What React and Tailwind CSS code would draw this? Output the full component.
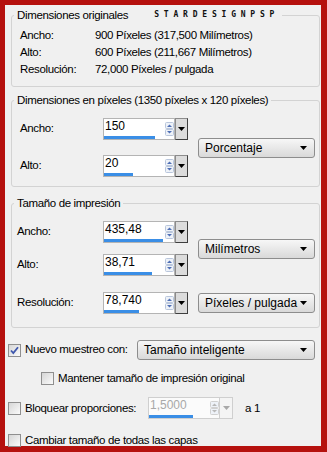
import React from 'react';

const font = "font-['Liberation_Sans',Arial,sans-serif] text-[11.5px] tracking-[-0.35px] text-black";

function Arrow({ color = '#000' }) {
  return (
    <svg width="7" height="4" viewBox="0 0 7 4">
      <path d="M0 0h7L3.5 4z" fill={color} />
    </svg>
  );
}

function Spinner({ disabled }) {
  const stroke = disabled ? '#d0d0d0' : '#b9c6dc';
  const fill = disabled ? '#b8b8b8' : '#4f6fb5';
  return (
    <svg width="9" height="14" viewBox="0 0 9 14">
      <rect x="0.5" y="0.5" width="8" height="6" rx="1" fill="#eef2f8" stroke={stroke} />
      <path d="M2 5h5L4.5 2.5z" fill={fill} />
      <rect x="0.5" y="7.5" width="8" height="6" rx="1" fill="#eef2f8" stroke={stroke} />
      <path d="M2 9h5L4.5 11.5z" fill={fill} />
    </svg>
  );
}

function SpinField({ value, bar, disabled }) {
  return (
    <div className="flex h-[22px]">
      <div className={`flex w-[72px] border ${disabled ? 'border-[#cfcfcf] bg-[#fbfbfb]' : 'border-[#b4b4b4] bg-white'}`}>
        <div className="flex flex-1 flex-col">
          <span className={`pl-[1px] text-[12px] leading-[15px] tracking-normal ${disabled ? 'text-[#a8a8a8]' : ''}`}>{value}</span>
          <div className={`mt-auto h-[3px] bg-[#3a8ee6] ${bar}`} />
        </div>
        <div className="flex w-[10px] items-center justify-center">
          <Spinner disabled={disabled} />
        </div>
      </div>
      {disabled ? (
        <div className="flex w-[13px] items-center justify-center border border-l-0 border-[#cfcfcf] bg-[#f4f4f4]">
          <Arrow color="#a8a8a8" />
        </div>
      ) : (
        <div className="flex w-[13px] items-center justify-center border border-[#8c8c8c] border-r-[#3f3f3f] border-b-[#3f3f3f] bg-[#dcdcdc]">
          <Arrow />
        </div>
      )}
    </div>
  );
}

function Combo({ label, width }) {
  return (
    <div className={`flex h-[20px] items-center justify-between rounded-[3px] border border-[#8d8d8d] bg-gradient-to-b from-[#f7f7f7] to-[#d9d9d9] pl-[6px] pr-[7px] ${width}`}>
      <span className="text-[12px] tracking-normal">{label}</span>
      <Arrow />
    </div>
  );
}

function Check({ checked }) {
  return (
    <span className="flex h-[13px] w-[13px] shrink-0 items-center justify-center border border-[#8f8f8f] bg-gradient-to-br from-[#d6d6d6] to-[#fbfbfb]">
      {checked && (
        <svg width="9" height="9" viewBox="0 0 9 9">
          <path d="M1 4.5l2.3 2.5L8 1.2" fill="none" stroke="#3f58ad" strokeWidth="1.8" />
        </svg>
      )}
    </span>
  );
}

function Group({ title, extra, className = '', children }) {
  return (
    <fieldset className={`ml-[3px] rounded-[3px] border border-[#d3d3d3] ${className}`}>
      <legend className="ml-[2px] flex items-center px-[3px] leading-[14px]">
        <span>{title}</span>
        {extra}
      </legend>
      {children}
    </fieldset>
  );
}

function FieldRow({ label, labelWidth, value, bar }) {
  return (
    <div className="flex items-center">
      <span className={labelWidth}>{label}</span>
      <SpinField value={value} bar={bar} />
    </div>
  );
}

export default function App() {
  return (
    <div className={`h-[452px] w-[327px] bg-[#b5110e] pb-[6px] pl-[5px] pr-[6px] pt-[5px] ${font}`}>
      <div className="h-full bg-[#f0f0f0] pl-[3px] pr-[1px] pt-[3px]">
        {/* Original size */}
        <Group
          title="Dimensiones originales"
          extra={
            <span className="ml-[26px] font-['DejaVu_Sans_Mono',monospace] text-[8px] font-bold tracking-[4.8px] text-[#111]">
              STARDESIGNPSP
            </span>
          }
          className="pb-[8px]"
        >
          <div className="mt-[5px] flex flex-col pl-[8px]">
            <div className="flex h-[17px] items-center">
              <span className="w-[75px]">Ancho:</span>
              <span>900 Píxeles (317,500 Milímetros)</span>
            </div>
            <div className="flex h-[17px] items-center">
              <span className="w-[75px]">Alto:</span>
              <span>600 Píxeles (211,667 Milímetros)</span>
            </div>
            <div className="flex h-[17px] items-center">
              <span className="w-[75px]">Resolución:</span>
              <span>72,000 Píxeles / pulgada</span>
            </div>
          </div>
        </Group>

        {/* Pixel size */}
        <Group title="Dimensiones en píxeles (1350 píxeles x 120 píxeles)" className="mt-[6px] pb-[9px]">
          <div className="mt-[11px] flex items-center justify-between pl-[8px] pr-[4px]">
            <div className="flex flex-col gap-[15px]">
              <FieldRow label="Ancho:" labelWidth="w-[83px]" value="150" bar="w-[51px]" />
              <FieldRow label="Alto:" labelWidth="w-[83px]" value="20" bar="w-[29px]" />
            </div>
            <Combo label="Porcentaje" width="w-[117px]" />
          </div>
        </Group>

        {/* Print size */}
        <Group title="Tamaño de impresión" className="mt-[9px] pb-[13px]">
          <div className="pl-[5px] pr-[4px]">
            <div className="mt-[11px] flex items-center justify-between">
              <div className="flex flex-col gap-[11px]">
                <FieldRow label="Ancho:" labelWidth="w-[86px]" value="435,48" bar="w-[59px]" />
                <FieldRow label="Alto:" labelWidth="w-[86px]" value="38,71" bar="w-[48px]" />
              </div>
              <Combo label="Milímetros" width="w-[117px]" />
            </div>
            <div className="mt-[16px] flex items-center justify-between">
              <FieldRow label="Resolución:" labelWidth="w-[86px]" value="78,740" bar="w-[35px]" />
              <Combo label="Píxeles / pulgada" width="w-[117px]" />
            </div>
          </div>
        </Group>

        {/* Options */}
        <div className="mt-[12px] flex items-center">
          <Check checked />
          <span className="ml-[4px] w-[112px]">Nuevo muestreo con:</span>
          <Combo label="Tamaño inteligente" width="w-[178px]" />
        </div>
        <div className="ml-[33px] mt-[10px] flex items-center">
          <Check />
          <span className="ml-[4px]">Mantener tamaño de impresión original</span>
        </div>
        <div className="mt-[10px] flex items-center">
          <Check />
          <span className="ml-[4px] w-[123px]">Bloquear proporciones:</span>
          <SpinField value="1,5000" bar="w-[44px]" disabled />
          <span className="ml-[12px]">a 1</span>
        </div>
        <div className="mt-[13px] flex items-center">
          <Check />
          <span className="ml-[4px]">Cambiar tamaño de todas las capas</span>
        </div>
      </div>
    </div>
  );
}
